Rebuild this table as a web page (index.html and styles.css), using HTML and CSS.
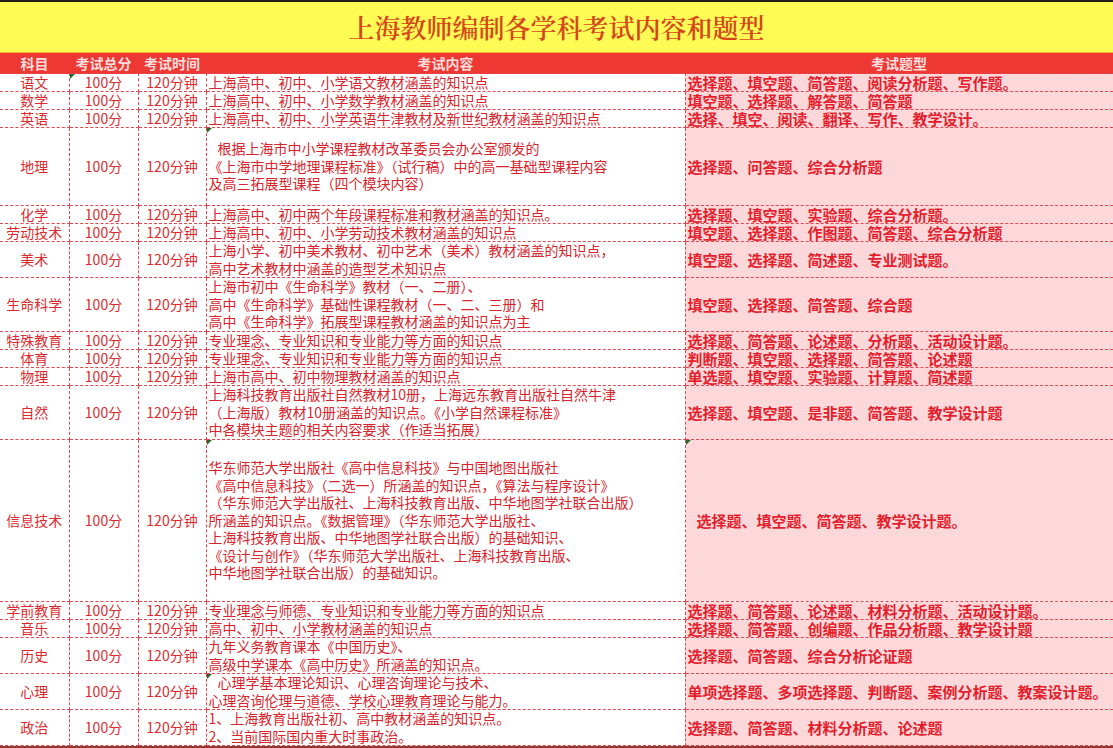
FILE: index.html
```html
<!DOCTYPE html>
<html lang="zh-CN">
<head>
<meta charset="utf-8">
<title>上海教师编制各学科考试内容和题型</title>
<link rel="stylesheet" href="styles.css">
</head>
<body>
<div class="sheet">
  <div class="title-band"><h1 class="title">上海教师编制各学科考试内容和题型</h1></div>
  <table class="grid">
    <colgroup>
      <col class="c-subj"><col class="c-score"><col class="c-time"><col class="c-content"><col class="c-type">
    </colgroup>
    <thead>
      <tr class="head"><th>科目</th><th>考试总分</th><th>考试时间</th><th>考试内容</th><th>考试题型</th></tr>
    </thead>
    <tbody>
      <tr class="h1"><td class="subj">语文</td><td class="num mark">100分</td><td class="num">120分钟</td><td class="content">上海高中、初中、小学语文教材涵盖的知识点</td><td class="type">选择题、填空题、简答题、阅读分析题、写作题。</td></tr>
      <tr class="h1"><td class="subj">数学</td><td class="num">100分</td><td class="num">120分钟</td><td class="content">上海高中、初中、小学数学教材涵盖的知识点</td><td class="type">填空题、选择题、解答题、简答题</td></tr>
      <tr class="h1"><td class="subj">英语</td><td class="num">100分</td><td class="num">120分钟</td><td class="content">上海高中、初中、小学英语牛津教材及新世纪教材涵盖的知识点</td><td class="type">选择、填空、阅读、翻译、写作、教学设计。</td></tr>
      <tr class="h4"><td class="subj">地理</td><td class="num">100分</td><td class="num">120分钟</td><td class="content mark"><span class="indent">根据上海市中小学课程教材改革委员会办公室颁发的</span><br>《上海市中学地理课程标准》（试行稿）中的高一基础型课程内容<br>及高三拓展型课程（四个模块内容）</td><td class="type">选择题、问答题、综合分析题</td></tr>
      <tr class="h1"><td class="subj">化学</td><td class="num">100分</td><td class="num">120分钟</td><td class="content">上海高中、初中两个年段课程标准和教材涵盖的知识点。</td><td class="type">选择题、填空题、实验题、综合分析题。</td></tr>
      <tr class="h1"><td class="subj">劳动技术</td><td class="num">100分</td><td class="num">120分钟</td><td class="content">上海高中、初中、小学劳动技术教材涵盖的知识点</td><td class="type">填空题、选择题、作图题、简答题、综合分析题</td></tr>
      <tr class="h2"><td class="subj">美术</td><td class="num">100分</td><td class="num">120分钟</td><td class="content">上海小学、初中美术教材、初中艺术（美术）教材涵盖的知识点，<br>高中艺术教材中涵盖的造型艺术知识点</td><td class="type">填空题、选择题、简述题、专业测试题。</td></tr>
      <tr class="h3"><td class="subj">生命科学</td><td class="num">100分</td><td class="num">120分钟</td><td class="content">上海市初中《生命科学》教材（一、二册）、<br>高中《生命科学》基础性课程教材（一、二、三册）和<br>高中《生命科学》拓展型课程教材涵盖的知识点为主</td><td class="type">填空题、选择题、简答题、综合题</td></tr>
      <tr class="h1"><td class="subj">特殊教育</td><td class="num">100分</td><td class="num">120分钟</td><td class="content">专业理念、专业知识和专业能力等方面的知识点</td><td class="type">选择题、简答题、论述题、分析题、活动设计题。</td></tr>
      <tr class="h1"><td class="subj">体育</td><td class="num">100分</td><td class="num">120分钟</td><td class="content">专业理念、专业知识和专业能力等方面的知识点</td><td class="type">判断题、填空题、选择题、简答题、论述题</td></tr>
      <tr class="h1"><td class="subj">物理</td><td class="num">100分</td><td class="num">120分钟</td><td class="content">上海市高中、初中物理教材涵盖的知识点</td><td class="type">单选题、填空题、实验题、计算题、简述题</td></tr>
      <tr class="h3"><td class="subj">自然</td><td class="num">100分</td><td class="num">120分钟</td><td class="content">上海科技教育出版社自然教材10册，上海远东教育出版社自然牛津<br>（上海版）教材10册涵盖的知识点。《小学自然课程标准》<br>中各模块主题的相关内容要求（作适当拓展）</td><td class="type">选择题、填空题、是非题、简答题、教学设计题</td></tr>
      <tr class="h9"><td class="subj">信息技术</td><td class="num">100分</td><td class="num">120分钟</td><td class="content mark">华东师范大学出版社《高中信息科技》与中国地图出版社<br>《高中信息科技》（二选一）所涵盖的知识点，《算法与程序设计》<br>（华东师范大学出版社、上海科技教育出版、中华地图学社联合出版）<br>所涵盖的知识点。《数据管理》（华东师范大学出版社、<br>上海科技教育出版、中华地图学社联合出版）的基础知识、<br>《设计与创作》（华东师范大学出版社、上海科技教育出版、<br>中华地图学社联合出版）的基础知识。</td><td class="type mark"><span class="indent">选择题、填空题、简答题、教学设计题。</span></td></tr>
      <tr class="h1"><td class="subj">学前教育</td><td class="num">100分</td><td class="num">120分钟</td><td class="content">专业理念与师德、专业知识和专业能力等方面的知识点</td><td class="type">选择题、简答题、论述题、材料分析题、活动设计题。</td></tr>
      <tr class="h1"><td class="subj">音乐</td><td class="num">100分</td><td class="num">120分钟</td><td class="content">高中、初中、小学教材涵盖的知识点</td><td class="type">选择题、简答题、创编题、作品分析题、教学设计题</td></tr>
      <tr class="h2"><td class="subj">历史</td><td class="num">100分</td><td class="num">120分钟</td><td class="content">九年义务教育课本《中国历史》、<br>高级中学课本《高中历史》所涵盖的知识点。</td><td class="type">选择题、简答题、综合分析论证题</td></tr>
      <tr class="h2"><td class="subj">心理</td><td class="num">100分</td><td class="num">120分钟</td><td class="content mark"><span class="indent">心理学基本理论知识、心理咨询理论与技术、</span><br>心理咨询伦理与道德、学校心理教育理论与能力。</td><td class="type">单项选择题、多项选择题、判断题、案例分析题、教案设计题。</td></tr>
      <tr class="h2"><td class="subj">政治</td><td class="num">100分</td><td class="num">120分钟</td><td class="content">1、上海教育出版社初、高中教材涵盖的知识点。<br>2、当前国际国内重大时事政治。</td><td class="type">选择题、简答题、材料分析题、论述题</td></tr>
    </tbody>
  </table>
  <div class="bottom-rule"></div>
</div>
</body>
</html>
```

FILE: styles.css
```css
* { box-sizing: border-box; }

html, body {
  margin: 0;
  padding: 0;
  background: #ffffff;
}

body {
  font-family: "Noto Sans CJK SC", "Noto Sans", sans-serif;
  color: #dd2a2e;
  width: 1113px;
  height: 748px;
  overflow: hidden;
}

.sheet {
  width: 1113px;
}

.title-band {
  height: 53px;
  background: #fffb55;
  border-top: 2px solid #1d1d1d;
  border-bottom: 1px solid #f3b02c;
  display: flex;
  align-items: center;
  justify-content: center;
}

.title {
  margin: 0;
  font-family: "Noto Serif CJK SC", "Noto Sans CJK SC", serif;
  font-weight: 600;
  font-size: 26px;
  line-height: 30px;
  color: #d5461c;
}

.grid {
  width: 1113px;
  border-collapse: collapse;
  table-layout: fixed;
}

.c-subj { width: 69px; }
.c-score { width: 69px; }
.c-time { width: 68px; }
.c-content { width: 479px; }
.c-type { width: 428px; }

.head {
  height: 20px;
  background: #ee3833;
}

.head th {
  padding: 0;
  font-size: 14px;
  line-height: 20px;
  font-weight: 700;
  color: #ffdede;
  text-align: center;
  border: none;
}

td {
  padding: 0;
  border: 1px dashed #e0474f;
  vertical-align: middle;
  font-size: 14px;
  line-height: 17.5px;
  white-space: nowrap;
}

.h1 { height: 18px; }
.h2 { height: 36px; }
.h3 { height: 54px; }
.h4 { height: 78px; }
.h9 { height: 162px; }

.h1 td { line-height: 17px; }

.subj {
  text-align: center;
  border-left: none;
}

.num {
  text-align: center;
}

.content {
  padding-left: 2px;
  color: #d8242c;
}

.type {
  background: #fdd8db;
  padding-left: 2px;
  font-size: 15px;
  font-weight: 700;
  color: #e41e2c;
  border-right: none;
}

.indent {
  padding-left: 9px;
}

.mark {
  position: relative;
}

.mark::before {
  content: "";
  position: absolute;
  left: 0;
  top: 0;
  width: 0;
  height: 0;
  border-top: 5px solid #1f6b2a;
  border-right: 5px solid transparent;
}

.bottom-rule {
  height: 3px;
  background: #93392f;
}
```
